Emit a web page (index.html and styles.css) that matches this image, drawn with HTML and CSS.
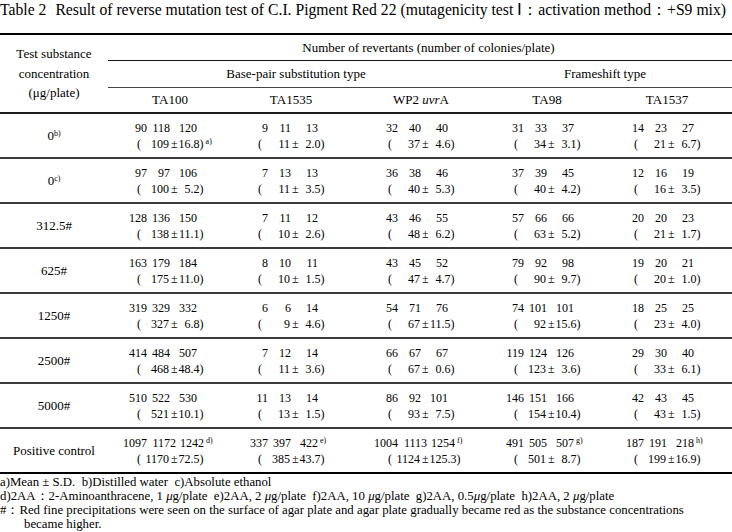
FILE: index.html
```html
<!DOCTYPE html>
<html lang="en">
<head>
<meta charset="utf-8">
<title>Table 2</title>
<link rel="stylesheet" href="styles.css">
</head>
<body>
<p class="title"><span class="tno">Table 2</span>Result of reverse mutation test of C.I. Pigment Red 22 (mutagenicity test Ⅰ：activation method：+S9 mix)</p>
<table class="res">
<colgroup><col class="c0"><col class="c1"><col class="c2"><col class="c3"><col class="c4"><col class="c5"></colgroup>
<thead>
<tr class="h1"><th rowspan="3" class="conc">Test substance<br>concentration<br>(μg/plate)</th><th colspan="5" class="num">Number of revertants (number of colonies/plate)</th></tr>
<tr class="h2"><th colspan="3" class="bp">Base-pair substitution type</th><th colspan="2" class="fs">Frameshift type</th></tr>
<tr class="h3"><th>TA100</th><th>TA1535</th><th>WP2 <i>uvr</i>A</th><th>TA98</th><th>TA1537</th></tr>
</thead>
<tbody>
<tr><th class="rc">0<span class="fn0">b)</span></th>
<td><div class="v"><div class="r1"><span class="n1">90</span><span class="n2">118</span><span class="n3">120</span></div><div class="r2"><span class="op">(</span><span class="mn">109</span><span class="pm">±</span><span class="sd">16.8</span>)<span class="fn">a)</span></div></div></td>
<td><div class="v"><div class="r1"><span class="n1">9</span><span class="n2">11</span><span class="n3">13</span></div><div class="r2"><span class="op">(</span><span class="mn">11</span><span class="pm">±</span><span class="sd">2.0</span>)</div></div></td>
<td><div class="v"><div class="r1"><span class="n1">32</span><span class="n2">40</span><span class="n3">40</span></div><div class="r2"><span class="op">(</span><span class="mn">37</span><span class="pm">±</span><span class="sd">4.6</span>)</div></div></td>
<td><div class="v"><div class="r1"><span class="n1">31</span><span class="n2">33</span><span class="n3">37</span></div><div class="r2"><span class="op">(</span><span class="mn">34</span><span class="pm">±</span><span class="sd">3.1</span>)</div></div></td>
<td><div class="v"><div class="r1"><span class="n1">14</span><span class="n2">23</span><span class="n3">27</span></div><div class="r2"><span class="op">(</span><span class="mn">21</span><span class="pm">±</span><span class="sd">6.7</span>)</div></div></td>
</tr>
<tr><th class="rc">0<span class="fn0">c)</span></th>
<td><div class="v"><div class="r1"><span class="n1">97</span><span class="n2">97</span><span class="n3">106</span></div><div class="r2"><span class="op">(</span><span class="mn">100</span><span class="pm">±</span><span class="sd">5.2</span>)</div></div></td>
<td><div class="v"><div class="r1"><span class="n1">7</span><span class="n2">13</span><span class="n3">13</span></div><div class="r2"><span class="op">(</span><span class="mn">11</span><span class="pm">±</span><span class="sd">3.5</span>)</div></div></td>
<td><div class="v"><div class="r1"><span class="n1">36</span><span class="n2">38</span><span class="n3">46</span></div><div class="r2"><span class="op">(</span><span class="mn">40</span><span class="pm">±</span><span class="sd">5.3</span>)</div></div></td>
<td><div class="v"><div class="r1"><span class="n1">37</span><span class="n2">39</span><span class="n3">45</span></div><div class="r2"><span class="op">(</span><span class="mn">40</span><span class="pm">±</span><span class="sd">4.2</span>)</div></div></td>
<td><div class="v"><div class="r1"><span class="n1">12</span><span class="n2">16</span><span class="n3">19</span></div><div class="r2"><span class="op">(</span><span class="mn">16</span><span class="pm">±</span><span class="sd">3.5</span>)</div></div></td>
</tr>
<tr><th class="rc">312.5#</th>
<td><div class="v"><div class="r1"><span class="n1">128</span><span class="n2">136</span><span class="n3">150</span></div><div class="r2"><span class="op">(</span><span class="mn">138</span><span class="pm">±</span><span class="sd">11.1</span>)</div></div></td>
<td><div class="v"><div class="r1"><span class="n1">7</span><span class="n2">11</span><span class="n3">12</span></div><div class="r2"><span class="op">(</span><span class="mn">10</span><span class="pm">±</span><span class="sd">2.6</span>)</div></div></td>
<td><div class="v"><div class="r1"><span class="n1">43</span><span class="n2">46</span><span class="n3">55</span></div><div class="r2"><span class="op">(</span><span class="mn">48</span><span class="pm">±</span><span class="sd">6.2</span>)</div></div></td>
<td><div class="v"><div class="r1"><span class="n1">57</span><span class="n2">66</span><span class="n3">66</span></div><div class="r2"><span class="op">(</span><span class="mn">63</span><span class="pm">±</span><span class="sd">5.2</span>)</div></div></td>
<td><div class="v"><div class="r1"><span class="n1">20</span><span class="n2">20</span><span class="n3">23</span></div><div class="r2"><span class="op">(</span><span class="mn">21</span><span class="pm">±</span><span class="sd">1.7</span>)</div></div></td>
</tr>
<tr><th class="rc">625#</th>
<td><div class="v"><div class="r1"><span class="n1">163</span><span class="n2">179</span><span class="n3">184</span></div><div class="r2"><span class="op">(</span><span class="mn">175</span><span class="pm">±</span><span class="sd">11.0</span>)</div></div></td>
<td><div class="v"><div class="r1"><span class="n1">8</span><span class="n2">10</span><span class="n3">11</span></div><div class="r2"><span class="op">(</span><span class="mn">10</span><span class="pm">±</span><span class="sd">1.5</span>)</div></div></td>
<td><div class="v"><div class="r1"><span class="n1">43</span><span class="n2">45</span><span class="n3">52</span></div><div class="r2"><span class="op">(</span><span class="mn">47</span><span class="pm">±</span><span class="sd">4.7</span>)</div></div></td>
<td><div class="v"><div class="r1"><span class="n1">79</span><span class="n2">92</span><span class="n3">98</span></div><div class="r2"><span class="op">(</span><span class="mn">90</span><span class="pm">±</span><span class="sd">9.7</span>)</div></div></td>
<td><div class="v"><div class="r1"><span class="n1">19</span><span class="n2">20</span><span class="n3">21</span></div><div class="r2"><span class="op">(</span><span class="mn">20</span><span class="pm">±</span><span class="sd">1.0</span>)</div></div></td>
</tr>
<tr><th class="rc">1250#</th>
<td><div class="v"><div class="r1"><span class="n1">319</span><span class="n2">329</span><span class="n3">332</span></div><div class="r2"><span class="op">(</span><span class="mn">327</span><span class="pm">±</span><span class="sd">6.8</span>)</div></div></td>
<td><div class="v"><div class="r1"><span class="n1">6</span><span class="n2">6</span><span class="n3">14</span></div><div class="r2"><span class="op">(</span><span class="mn">9</span><span class="pm">±</span><span class="sd">4.6</span>)</div></div></td>
<td><div class="v"><div class="r1"><span class="n1">54</span><span class="n2">71</span><span class="n3">76</span></div><div class="r2"><span class="op">(</span><span class="mn">67</span><span class="pm">±</span><span class="sd">11.5</span>)</div></div></td>
<td><div class="v"><div class="r1"><span class="n1">74</span><span class="n2">101</span><span class="n3">101</span></div><div class="r2"><span class="op">(</span><span class="mn">92</span><span class="pm">±</span><span class="sd">15.6</span>)</div></div></td>
<td><div class="v"><div class="r1"><span class="n1">18</span><span class="n2">25</span><span class="n3">25</span></div><div class="r2"><span class="op">(</span><span class="mn">23</span><span class="pm">±</span><span class="sd">4.0</span>)</div></div></td>
</tr>
<tr><th class="rc">2500#</th>
<td><div class="v"><div class="r1"><span class="n1">414</span><span class="n2">484</span><span class="n3">507</span></div><div class="r2"><span class="op">(</span><span class="mn">468</span><span class="pm">±</span><span class="sd">48.4</span>)</div></div></td>
<td><div class="v"><div class="r1"><span class="n1">7</span><span class="n2">12</span><span class="n3">14</span></div><div class="r2"><span class="op">(</span><span class="mn">11</span><span class="pm">±</span><span class="sd">3.6</span>)</div></div></td>
<td><div class="v"><div class="r1"><span class="n1">66</span><span class="n2">67</span><span class="n3">67</span></div><div class="r2"><span class="op">(</span><span class="mn">67</span><span class="pm">±</span><span class="sd">0.6</span>)</div></div></td>
<td><div class="v"><div class="r1"><span class="n1">119</span><span class="n2">124</span><span class="n3">126</span></div><div class="r2"><span class="op">(</span><span class="mn">123</span><span class="pm">±</span><span class="sd">3.6</span>)</div></div></td>
<td><div class="v"><div class="r1"><span class="n1">29</span><span class="n2">30</span><span class="n3">40</span></div><div class="r2"><span class="op">(</span><span class="mn">33</span><span class="pm">±</span><span class="sd">6.1</span>)</div></div></td>
</tr>
<tr><th class="rc">5000#</th>
<td><div class="v"><div class="r1"><span class="n1">510</span><span class="n2">522</span><span class="n3">530</span></div><div class="r2"><span class="op">(</span><span class="mn">521</span><span class="pm">±</span><span class="sd">10.1</span>)</div></div></td>
<td><div class="v"><div class="r1"><span class="n1">11</span><span class="n2">13</span><span class="n3">14</span></div><div class="r2"><span class="op">(</span><span class="mn">13</span><span class="pm">±</span><span class="sd">1.5</span>)</div></div></td>
<td><div class="v"><div class="r1"><span class="n1">86</span><span class="n2">92</span><span class="n3">101</span></div><div class="r2"><span class="op">(</span><span class="mn">93</span><span class="pm">±</span><span class="sd">7.5</span>)</div></div></td>
<td><div class="v"><div class="r1"><span class="n1">146</span><span class="n2">151</span><span class="n3">166</span></div><div class="r2"><span class="op">(</span><span class="mn">154</span><span class="pm">±</span><span class="sd">10.4</span>)</div></div></td>
<td><div class="v"><div class="r1"><span class="n1">42</span><span class="n2">43</span><span class="n3">45</span></div><div class="r2"><span class="op">(</span><span class="mn">43</span><span class="pm">±</span><span class="sd">1.5</span>)</div></div></td>
</tr>
<tr class="last"><th class="rc">Positive control</th>
<td><div class="v wide"><div class="r1"><span class="n1">1097</span><span class="n2">1172</span><span class="n3">1242</span><span class="fn">d)</span></div><div class="r2"><span class="op">(</span><span class="mn">1170</span><span class="pm">±</span><span class="sd">72.5</span>)</div></div></td>
<td><div class="v"><div class="r1"><span class="n1">337</span><span class="n2">397</span><span class="n3">422</span><span class="fn">e)</span></div><div class="r2"><span class="op">(</span><span class="mn">385</span><span class="pm">±</span><span class="sd">43.7</span>)</div></div></td>
<td><div class="v wide"><div class="r1"><span class="n1">1004</span><span class="n2">1113</span><span class="n3">1254</span><span class="fn">f)</span></div><div class="r2"><span class="op">(</span><span class="mn">1124</span><span class="pm">±</span><span class="sd">125.3</span>)</div></div></td>
<td><div class="v"><div class="r1"><span class="n1">491</span><span class="n2">505</span><span class="n3">507</span><span class="fn">g)</span></div><div class="r2"><span class="op">(</span><span class="mn">501</span><span class="pm">±</span><span class="sd">8.7</span>)</div></div></td>
<td><div class="v"><div class="r1"><span class="n1">187</span><span class="n2">191</span><span class="n3">218</span><span class="fn">h)</span></div><div class="r2"><span class="op">(</span><span class="mn">199</span><span class="pm">±</span><span class="sd">16.9</span>)</div></div></td>
</tr>
</tbody>
</table>
<div class="notes">
<p>a)Mean ± S.D.&nbsp; b)Distilled water&nbsp; c)Absolute ethanol</p>
<p>d)2AA：2-Aminoanthracene, 1 <i>μ</i>g/plate&nbsp; e)2AA, 2 <i>μ</i>g/plate&nbsp; f)2AA, 10 <i>μ</i>g/plate&nbsp; g)2AA, 0.5<i>μ</i>g/plate&nbsp; h)2AA, 2 <i>μ</i>g/plate</p>
<p class="hang">#：Red fine precipitations were seen on the surface of agar plate and agar plate gradually became red as the substance concentrations became higher.</p>
</div>
</body>
</html>
```
FILE: styles.css
```css
html, body {
  margin: 0;
  padding: 0;
  background: #fff;
}
body {
  width: 732px;
  font-family: "Liberation Serif", "Times New Roman", serif;
  color: #000;
}
.title {
  margin: 0 0 13px;
  font-size: 15.7px;
  line-height: 20px;
  height: 20px;
  white-space: nowrap;
}
.tno {
  margin-right: 9px;
}
.res {
  width: 732px;
  table-layout: fixed;
  border-collapse: separate;
  border-spacing: 0;
  border-top: 2px solid #000;
  font-family: "Liberation Serif", "Times New Roman", serif;
  font-size: 13px;
  color: #000;
}
.c0 { width: 108px; }
.c1 { width: 124px; }
.c2 { width: 118px; }
.c3 { width: 142px; }
.c4 { width: 110px; }
.c5 { width: 130px; }
.res th,
.res td {
  padding: 0;
  font-weight: normal;
  text-align: center;
  vertical-align: middle;
  font-family: "Liberation Serif", "Times New Roman", serif;
}
.h1 { height: 26px; }
.h2 { height: 27px; }
.h3 { height: 26px; }
.h1 .num {
  border-bottom: 1px solid #111;
  padding-left: 17px;
}
.h2 th {
  border-bottom: 1px solid #444;
}
.h2 .bp { padding-right: 8px; }
.h2 .fs { padding-right: 14px; }
.h3 th,
.conc {
  border-bottom: 2px solid #1a1a1a;
}
.conc {
  line-height: 19.5px;
  padding-top: 3px;
}
tbody tr { height: 45px; }
tbody th,
tbody td {
  border-bottom: 2px solid #3a3a3a;
}
tbody td {
  padding-top: 2px;
}
tbody tr.last th,
tbody tr.last td {
  border-bottom: 2px solid #000;
}
.fn0 {
  font-size: 8px;
  vertical-align: 4px;
}
.v {
  display: inline-block;
  text-align: left;
  font-size: 12px;
  line-height: 16px;
  width: 66px;
  white-space: nowrap;
}
.r1,
.r2 {
  display: flex;
  align-items: baseline;
}
.r1 span.n1,
.r1 span.n2,
.r1 span.n3 {
  display: flex;
  justify-content: flex-end;
  flex: none;
}
.n1 { width: 10px; }
.n2 { width: 23px; }
.n3 { width: 27px; }
.wide .n2 { width: 29px; }
.wide .n3 { width: 28px; }
.op {
  width: 4px;
  flex: none;
}
.mn {
  width: 28px;
  flex: none;
  text-align: right;
}
.pm {
  margin: 0 1px 0 2px;
  flex: none;
}
.sd {
  min-width: 21px;
  flex: none;
  text-align: right;
}
.fn {
  display: inline-block;
  width: 0;
  overflow: visible;
  font-size: 8px;
  line-height: 8px;
  position: relative;
  top: -4px;
  padding-left: 2px;
}
.notes {
  margin-top: 1px;
  font-size: 12.8px;
  line-height: 14px;
}
.notes p {
  margin: 0;
  white-space: nowrap;
}
.notes .hang {
  white-space: normal;
  width: 700px;
  padding-left: 24px;
  text-indent: -24px;
}
```
